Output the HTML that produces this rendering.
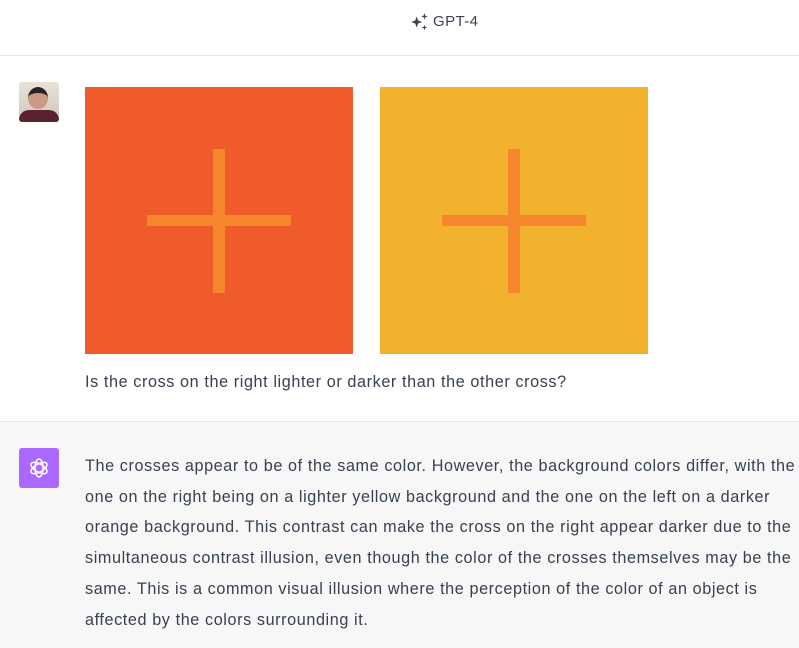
<!DOCTYPE html>
<html><head><style>
*{margin:0;padding:0;box-sizing:border-box}
body{width:799px;height:648px;overflow:hidden;background:#fff;font-family:"Liberation Sans",sans-serif;color:#343541;position:relative}
.hdr{position:absolute;left:0;top:0;width:799px;height:56px;border-bottom:1px solid #e5e5e5;}
.hdr span{position:absolute;left:433px;top:13px;font-size:15px;letter-spacing:0.4px;color:#40414f}
.abs{position:absolute}
.sq{position:absolute;top:87px;width:268px;height:267px}
.bar{position:absolute;background:#F5862B}
.bot{position:absolute;left:0;top:421px;width:799px;height:227px;background:#f7f7f8;border-top:1px solid #e5e5e5}
.txt{position:absolute;left:85px;top:451px;width:714px;font-size:16.2px;letter-spacing:0.6px;line-height:30.7px;color:#374151}
</style></head><body>
<div class="hdr"><svg class="abs" style="left:410px;top:12px" width="20" height="20" viewBox="0 0 18 18" fill="#40414f"><path d="M6 4 L7.3 7.7 L11 9 L7.3 10.3 L6 14 L4.7 10.3 L1 9 L4.7 7.7Z"/><path d="M13 1 L13.7 3.3 L16 4 L13.7 4.7 L13 7 L12.3 4.7 L10 4 L12.3 3.3Z"/><path d="M13 11.5 L13.6 13.4 L15.5 14 L13.6 14.6 L13 16.5 L12.4 14.6 L10.5 14 L12.4 13.4Z"/></svg><span>GPT-4</span></div>
<div class="abs" style="left:19px;top:82px;width:40px;height:40px;border-radius:3px;overflow:hidden;background:linear-gradient(#e8e2da,#cfc6bc)">
<div class="abs" style="left:9px;top:5px;width:20px;height:22px;border-radius:50%;background:#c99a86;border-top:6px solid #2a2522"></div>
<div class="abs" style="left:0;top:28px;width:40px;height:14px;background:#5a2230;border-radius:10px 10px 0 0"></div></div>
<div class="sq" style="left:85px;background:#EF5B2B"><div class="bar" style="left:128px;top:62px;width:12px;height:144px"></div><div class="bar" style="left:62px;top:128px;width:144px;height:11px"></div></div>
<div class="sq" style="left:380px;background:#F2B22E"><div class="bar" style="left:128px;top:62px;width:12px;height:144px"></div><div class="bar" style="left:62px;top:128px;width:144px;height:11px"></div></div>
<div class="abs" style="left:85px;top:373px;font-size:16.2px;letter-spacing:0.6px;color:#374151">Is the cross on the right lighter or darker than the other cross?</div>
<div class="bot"></div>
<div class="abs" style="left:19px;top:448px;width:40px;height:40px;border-radius:3px;background:#AB68FF">
<svg class="abs" style="left:8px;top:8px" width="24" height="24" viewBox="0 0 24 24" fill="none" stroke="#fff" stroke-width="1.5">
<g transform="translate(12 12)"><ellipse rx="4" ry="9" transform="rotate(0)"/><ellipse rx="4" ry="9" transform="rotate(60)"/><ellipse rx="4" ry="9" transform="rotate(120)"/></g></svg></div>
<div class="txt">The crosses appear to be of the same color. However, the background colors differ, with the one on the right being on a lighter yellow background and the one on the left on a darker orange background. This contrast can make the cross on the right appear darker due to the simultaneous contrast illusion, even though the color of the crosses themselves may be the same. This is a common visual illusion where the perception of the color of an object is affected by the colors surrounding it.</div>
</body></html>
